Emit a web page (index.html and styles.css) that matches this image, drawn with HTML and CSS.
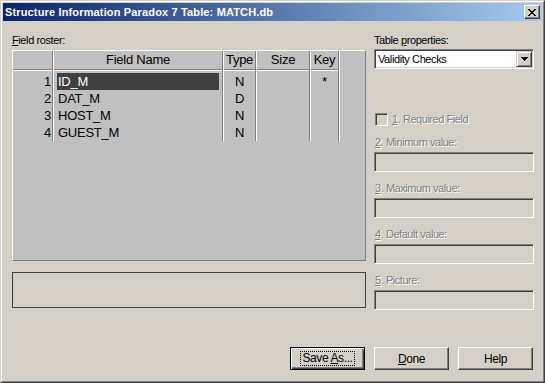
FILE: index.html
```html
<!DOCTYPE html>
<html>
<head>
<meta charset="utf-8">
<title>Structure Information</title>
<link rel="stylesheet" href="styles.css">
</head>
<body>
<div class="window">
  <div class="frame">
    <div class="titlebar">
      <span class="title">Structure Information Paradox 7 Table: MATCH.db</span>
      <span class="close"><svg width="8" height="7" viewBox="0 0 8 7" shape-rendering="crispEdges"><path fill="#000" d="M0 0h2v1h-2z M6 0h2v1h-2z M1 1h2v1h-2z M5 1h2v1h-2z M2 2h4v1h-4z M3 3h2v1h-2z M2 4h4v1h-4z M1 5h2v1h-2z M5 5h2v1h-2z M0 6h2v1h-2z M6 6h2v1h-2z"/></svg></span>
    </div>
    <div class="content">
      <div class="left">
        <div class="label"><u>F</u>ield roster:</div>
        <div class="grid">
          <div class="col c-ind">
            <div class="hd"></div>
            <div class="bd">
              <div class="cell num">1</div>
              <div class="cell num">2</div>
              <div class="cell num">3</div>
              <div class="cell num">4</div>
            </div>
          </div>
          <div class="col c-name">
            <div class="hd">Field Name</div>
            <div class="bd">
              <div class="cell name"><span class="nm sel">ID_M</span></div>
              <div class="cell name"><span class="nm">DAT_M</span></div>
              <div class="cell name"><span class="nm">HOST_M</span></div>
              <div class="cell name"><span class="nm">GUEST_M</span></div>
            </div>
          </div>
          <div class="col c-type">
            <div class="hd">Type</div>
            <div class="bd">
              <div class="cell ctr">N</div>
              <div class="cell ctr">D</div>
              <div class="cell ctr">N</div>
              <div class="cell ctr">N</div>
            </div>
          </div>
          <div class="col c-size">
            <div class="hd">Size</div>
            <div class="bd">
              <div class="cell"></div>
              <div class="cell"></div>
              <div class="cell"></div>
              <div class="cell"></div>
            </div>
          </div>
          <div class="col c-key">
            <div class="hd">Key</div>
            <div class="bd">
              <div class="cell ctr">*</div>
              <div class="cell"></div>
              <div class="cell"></div>
              <div class="cell"></div>
            </div>
          </div>
          <div class="c-fill"></div>
        </div>
        <div class="msg"></div>
      </div>
      <div class="right">
        <div class="label">Table <u>p</u>roperties:</div>
        <div class="combo">
          <span class="combo-text">Validity Checks</span>
          <span class="combo-btn"><svg width="7" height="4" viewBox="0 0 7 4" shape-rendering="crispEdges"><path fill="#000" d="M0 0h7v1h-7z M1 1h5v1h-5z M2 2h3v1h-3z M3 3h1v1h-1z"/></svg></span>
        </div>
        <div class="check">
          <span class="box"></span>
          <span class="dis"><u>1</u>. Required Field</span>
        </div>
        <div class="fg">
          <div class="flabel dis"><u>2</u>. Minimum value:</div>
          <div class="input"></div>
        </div>
        <div class="fg">
          <div class="flabel dis"><u>3</u>. Maximum value:</div>
          <div class="input"></div>
        </div>
        <div class="fg">
          <div class="flabel dis"><u>4</u>. Default value:</div>
          <div class="input"></div>
        </div>
        <div class="fg">
          <div class="flabel dis"><u>5</u>. Picture:</div>
          <div class="input"></div>
        </div>
      </div>
    </div>
    <div class="footer">
      <button class="btn default"><span class="focus">Save <u>A</u>s...</span></button>
      <button class="btn"><u>D</u>one</button>
      <button class="btn">Help</button>
    </div>
  </div>
</div>
</body>
</html>
```

FILE: styles.css
```css
* { box-sizing: border-box; }
html, body { margin: 0; padding: 0; background: #d4d0c8; }
body {
  font-family: "Liberation Sans", Arial, sans-serif;
  font-size: 11px;
  color: #000;
}
.window {
  width: 545px;
  height: 383px;
  border: 1px solid;
  border-color: #d4d0c8 #404040 #404040 #d4d0c8;
  background: #d4d0c8;
}
.frame {
  height: 100%;
  border: 1px solid;
  border-color: #fff #808080 #808080 #fff;
  padding: 1px;
  display: flex;
  flex-direction: column;
}
.titlebar {
  flex: none;
  height: 18px;
  display: flex;
  align-items: center;
  justify-content: space-between;
  padding: 0 2px 0 2px;
  background: linear-gradient(to right, #0a246a, #a6caf0);
}
.title {
  color: #fff;
  font-weight: bold;
  font-size: 11px;
  letter-spacing: 0.15px;
  line-height: 18px;
  white-space: nowrap;
}
.close {
  width: 16px;
  height: 14px;
  border: 1px solid;
  border-color: #fff #404040 #404040 #fff;
  box-shadow: inset -1px -1px 0 #808080;
  background: #d4d0c8;
  display: flex;
  align-items: center;
  justify-content: center;
}
.close svg { display: block; margin: 0 1px 0 0; }

.content {
  display: grid;
  grid-template-columns: 354px 160px;
  column-gap: 8px;
  padding: 12px 8px 0 9px;
}
.label {
  height: 14px;
  line-height: 14px;
  letter-spacing: -0.4px;
  white-space: nowrap;
}
.grid {
  margin-top: 3px;
  height: 211px;
  border: 1px solid;
  border-color: #fff #808080 #808080 #fff;
  background: #c0c0c0;
  display: flex;
  align-items: flex-start;
}
.col {
  flex: none;
  border-left: 1px solid #fff;
  border-right: 1px solid #808080;
}
.c-ind { width: 40px; border-left: 0; }
.c-name { width: 170px; }
.c-type { width: 33px; }
.c-size { width: 54px; }
.c-key { width: 29px; }
.c-fill { flex: none; width: 26px; height: 90px; border-left: 1px solid #fff; }
.hd {
  height: 19px;
  border-bottom: 1px solid #808080;
  text-align: center;
  font-size: 13px;
  line-height: 18px;
  letter-spacing: -0.25px;
  white-space: nowrap;
}
.bd {
  border-top: 1px solid #fff;
  padding-top: 2px;
}
.cell {
  height: 17px;
  line-height: 17px;
  font-size: 13px;
  letter-spacing: -0.25px;
  white-space: nowrap;
}
.num { text-align: right; padding-right: 1px; }
.ctr { text-align: center; }
.name { padding: 0 3px; }
.nm { display: block; height: 17px; padding-left: 1px; }
.sel { background: #404040; color: #fff; }

.msg {
  margin-top: 11px;
  height: 36px;
  border: 1px solid #404040;
}

.combo {
  margin-top: 2px;
  height: 20px;
  display: flex;
  align-items: center;
  border: 1px solid;
  border-color: #808080 #fff #fff #808080;
  box-shadow: inset 1px 1px 0 #404040, inset -1px -1px 0 #d4d0c8;
  background: #fff;
  padding: 1px;
}
.combo-text {
  flex: 1;
  padding-left: 2px;
  letter-spacing: -0.4px;
  line-height: 16px;
}
.combo-btn {
  width: 16px;
  height: 16px;
  border: 1px solid;
  border-color: #d4d0c8 #404040 #404040 #d4d0c8;
  box-shadow: inset 1px 1px 0 #fff, inset -1px -1px 0 #808080;
  background: #d4d0c8;
  display: flex;
  align-items: center;
  justify-content: center;
}
.combo-btn svg { display: block; }

.check {
  margin-top: 44px;
  height: 13px;
  display: flex;
  align-items: center;
  line-height: 13px;
}
.box {
  width: 13px;
  height: 13px;
  margin-left: 1px;
  margin-right: 4px;
  border: 1px solid;
  border-color: #808080 #fff #fff #808080;
  box-shadow: inset 1px 1px 0 #404040, inset -1px -1px 0 #d4d0c8;
  background: #d4d0c8;
}
.dis {
  color: #808080;
  text-shadow: 1px 1px 0 #fff;
  letter-spacing: -0.45px;
  white-space: nowrap;
}
.fg { margin-top: 9px; }
.flabel {
  height: 14px;
  line-height: 14px;
  margin-bottom: 3px;
  padding-left: 1px;
}
.input {
  height: 20px;
  border: 1px solid;
  border-color: #808080 #fff #fff #808080;
  box-shadow: inset 1px 1px 0 #404040, inset -1px -1px 0 #d4d0c8;
  background: #d4d0c8;
}

.footer {
  margin-top: auto;
  display: flex;
  justify-content: flex-end;
  gap: 9px;
  padding: 0 9px 10px 0;
}
.btn {
  width: 75px;
  height: 23px;
  padding: 0;
  margin: 0;
  font-family: "Liberation Sans", Arial, sans-serif;
  font-size: 12px;
  letter-spacing: -0.4px;
  color: #000;
  background: #d4d0c8;
  border: 1px solid;
  border-color: #fff #404040 #404040 #fff;
  box-shadow: inset -1px -1px 0 #808080;
  display: flex;
  align-items: center;
  justify-content: center;
}
.default {
  border-color: #000;
  box-shadow: inset 1px 1px 0 #fff, inset -1px -1px 0 #404040, inset -2px -2px 0 #808080;
}
.focus {
  display: inline-block;
  line-height: 13px;
  padding: 0 1px;
  outline: 1px dotted #000;
}
```
